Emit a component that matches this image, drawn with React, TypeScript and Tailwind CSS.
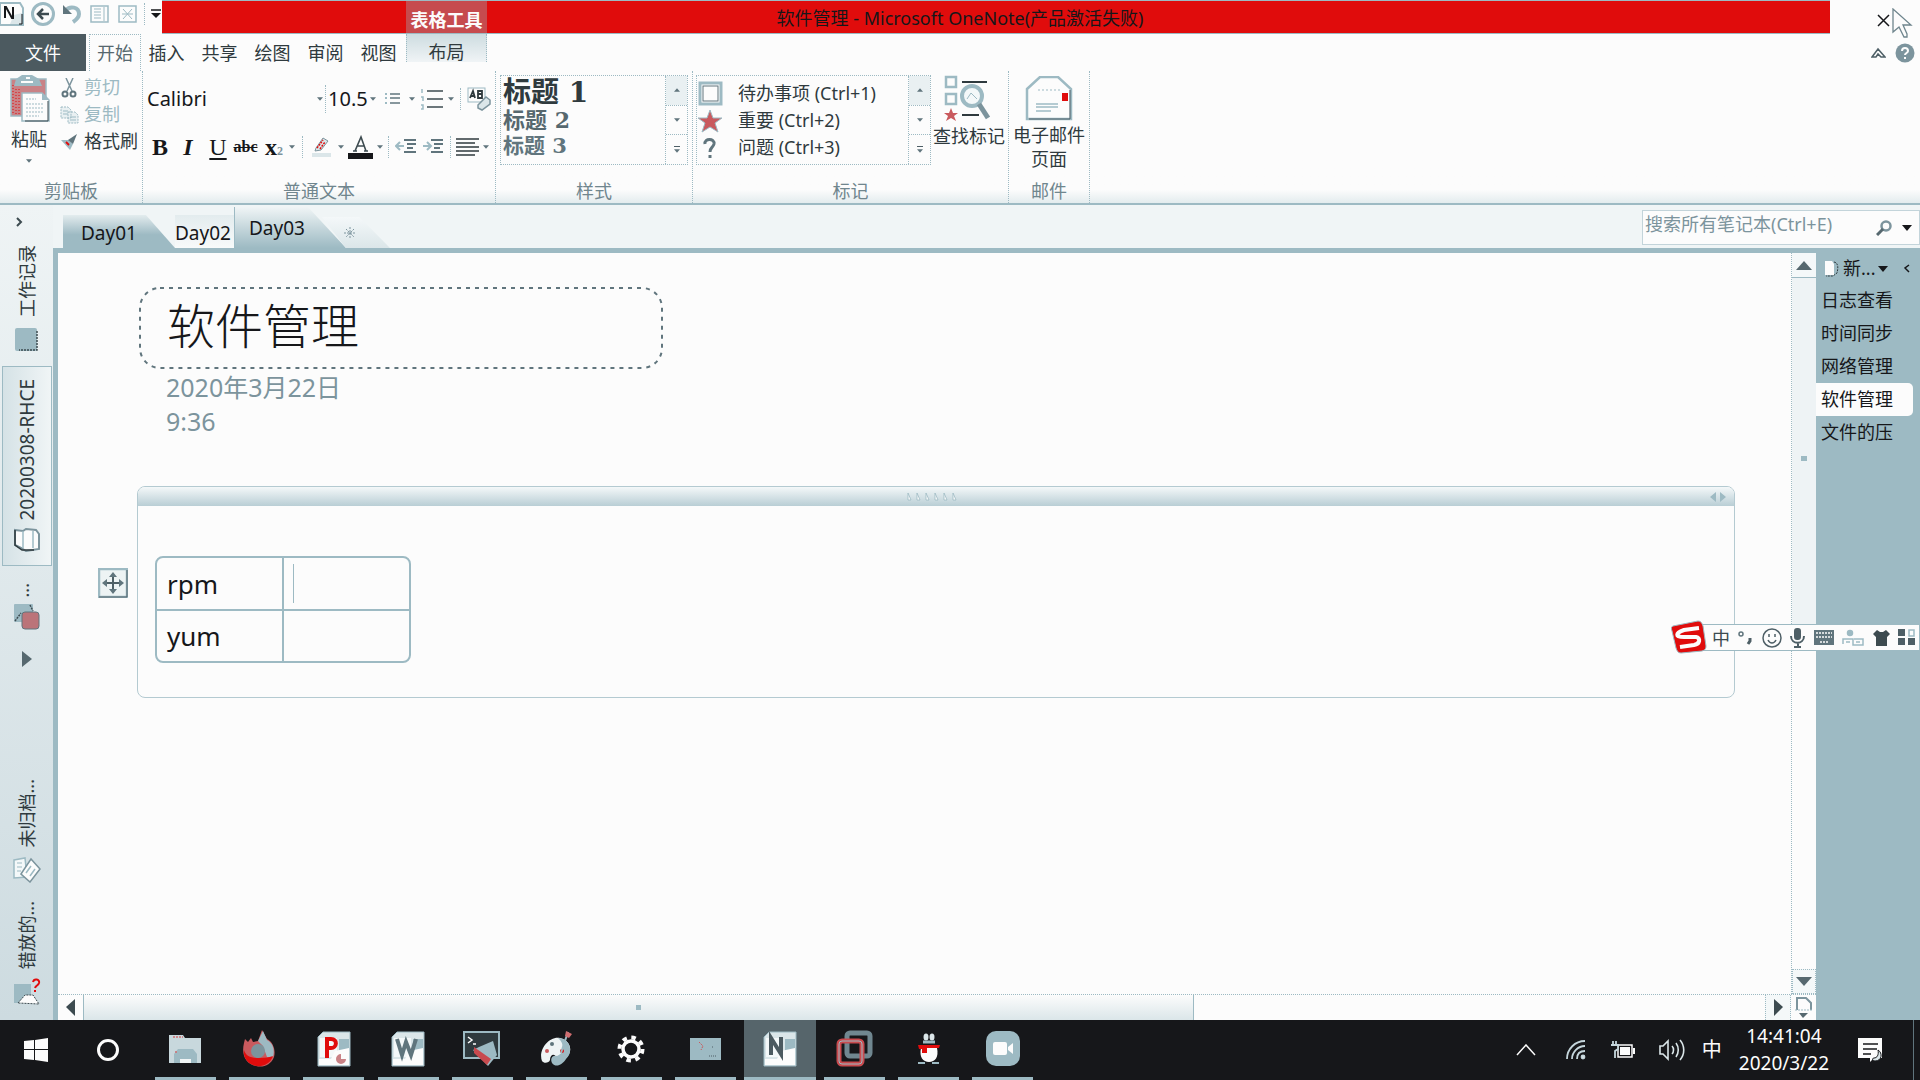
import React from "react";

type Kids = { children?: React.ReactNode };

const TEAL = "#9dbac3";
const INK = "#16171a";
const RED = "#e00c0c";

function Caret({ up = false, big = false }: { up?: boolean; big?: boolean }) {
  return (
    <svg width={big ? 10 : 6} height={big ? 6 : 4} viewBox="0 0 10 6" className="shrink-0" aria-hidden="true">
      <path d={up ? "M0 6L5 0L10 6Z" : "M0 0H10L5 6Z"} fill={big ? INK : "#60757d"} />
    </svg>
  );
}

function Dots() {
  return <span className="h-[22px] w-0 shrink-0 border-l border-dotted border-[#9dbac3]" />;
}

/* ---------- Title bar ---------- */

function TitleBar() {
  return (
    <header className="flex h-[34px] shrink-0 items-start">
      <div className="flex h-[34px] w-[162px] shrink-0 items-center gap-[6px] pb-[6px]">
        <button aria-label="OneNote">
          <svg width="24" height="26" viewBox="0 0 24 26">
            <path d="M0 2H20L23 7V24H0Z" fill="#fcfcfc" stroke={TEAL} strokeWidth="2" />
            <path d="M14 14L22 12V23H10Z" fill="#dbe6e9" />
            <path d="M5 17V6H6L12 17H13V6" fill="none" stroke={INK} strokeWidth="2" />
            <path d="M22 13V23H19" fill="none" stroke={INK} />
          </svg>
        </button>
        <button aria-label="后退">
          <svg width="26" height="26" viewBox="0 0 26 26">
            <circle cx="13" cy="13" r="10.500" fill="#fcfcfc" stroke={TEAL} strokeWidth="3" />
            <path d="M19 13H8M13 8L8 13L13 18" fill="none" stroke="#3d4b50" strokeWidth="2.500" />
          </svg>
        </button>
        <button aria-label="撤消">
          <svg width="20" height="22" viewBox="0 0 20 22">
            <path d="M3 8C8 2 17 4 17 11C17 15 14 17 11 19" fill="none" stroke={TEAL} strokeWidth="4" />
            <path d="M1 2V11H10Z" fill="#60757d" />
          </svg>
        </button>
        <button aria-label="停靠到桌面" className="ml-[2px]">
          <svg width="20" height="18" viewBox="0 0 20 18">
            <rect x="1" y="1" width="17" height="16" fill="none" stroke={TEAL} strokeWidth="1.500" />
            <path d="M4 4H11M4 7H11M4 10H11M4 13H11M14 2V16" stroke={TEAL} />
          </svg>
        </button>
        <button aria-label="整页视图" className="ml-[2px]">
          <svg width="20" height="18" viewBox="0 0 20 18">
            <rect x="1" y="1" width="17" height="16" fill="none" stroke={TEAL} strokeWidth="1.500" />
            <path d="M5 4L14 14M14 4L5 14M4 9H15" stroke={TEAL} />
          </svg>
        </button>
        <Dots />
        <button aria-label="自定义快速访问工具栏">
          <svg width="10" height="10" viewBox="0 0 10 10">
            <path d="M0 1H10" stroke={INK} strokeWidth="1.500" />
            <path d="M0 4H10L5 9Z" fill={INK} />
          </svg>
        </button>
      </div>
      <div className="flex h-[34px] min-w-0 flex-1 border-t border-b border-[#9dbac3] bg-[#e00c0c]">
        <div className="ml-[244px] flex w-[81px] shrink-0 items-center justify-center bg-[#c64b4e] pt-[6px] text-[18px] leading-[24px] font-bold text-[#fcfcfc]">
          表格工具
        </div>
        <h1 className="min-w-0 flex-1 truncate pt-[4px] pr-[397px] text-center text-[18px] leading-[26px] text-[#16171a]">
          软件管理 - Microsoft OneNote(产品激活失败)
        </h1>
      </div>
      <div className="relative flex h-[34px] w-[90px] shrink-0 items-center pt-[6px] pl-[47px]">
        <button aria-label="关闭">
          <svg width="13" height="13" viewBox="0 0 13 13">
            <path d="M1 1L12 12M12 1L1 12" stroke={INK} strokeWidth="1.500" />
          </svg>
        </button>
        <svg className="absolute top-[8px] left-[62px]" width="22" height="32" viewBox="0 0 22 32" aria-hidden="true">
          <path d="M1 1V24L7 19L12 29H15V26L11 17H19Z" fill="#fcfcfc" stroke="#6f858d" strokeWidth="1.300" />
        </svg>
      </div>
    </header>
  );
}

/* ---------- Ribbon tabs ---------- */

function RibbonTabs() {
  const tabs = ["插入", "共享", "绘图", "审阅", "视图"];
  return (
    <nav className="flex h-[37px] shrink-0 text-[18px] leading-[36px]">
      <button className="w-[86px] bg-[#4c5a60] text-[#fcfcfc]">文件</button>
      <button className="ml-[3px] w-[52px] border-x border-t border-dotted border-[#9dbac3] leading-[34px] text-[#56686f]">开始</button>
      <div className="flex w-[265px]">
        {tabs.map((t) => (
          <button key={t} className="flex-1 pr-[2px] text-[#2f3a3e]">{t}</button>
        ))}
      </div>
      <button className="h-[28px] w-[81px] border-x border-dotted border-[#9dbac3] bg-linear-to-b from-[#cddce0] to-[#f0f4f6] text-[#2f3a3e]">布局</button>
      <div className="flex flex-1 items-center justify-end gap-[9px] pr-[5px]">
        <button aria-label="功能区最小化">
          <svg width="15" height="12" viewBox="0 0 15 12">
            <path d="M1 10L7 2L14 10H10L7 7L5 10Z" fill="#fcfcfc" stroke="#4e5f66" strokeWidth="1.500" />
          </svg>
        </button>
        <button aria-label="帮助">
          <svg width="20" height="20" viewBox="0 0 20 20">
            <circle cx="10" cy="10" r="9.500" fill="#7c949d" />
            <path d="M7 8C7 4 13 4 13 8C13 10 10 10 10 12M10 14V16" fill="none" stroke="#fcfcfc" strokeWidth="2" />
          </svg>
        </button>
      </div>
    </nav>
  );
}

/* ---------- Ribbon ---------- */

function Group({ label, width, children }: Kids & { label: string; width: string }) {
  return (
    <section className={"flex shrink-0 flex-col border-r border-dotted border-[#9dbac3] pt-[1px] " + width}>
      <div className="flex h-[107px] min-h-0">{children}</div>
      <div className="text-center text-[18px] leading-[24px] text-[#70868e]">{label}</div>
    </section>
  );
}

function GalleryScroll() {
  return (
    <div className="flex w-[22px] flex-col border-l border-dotted border-[#9dbac3]">
      <button aria-label="上一行" className="flex flex-1 items-center justify-center bg-[#e9f0f2]"><Caret up /></button>
      <button aria-label="下一行" className="flex flex-1 items-center justify-center border-y border-dotted border-[#9dbac3]"><Caret /></button>
      <button aria-label="其他" className="flex flex-1 flex-col items-center justify-center gap-[2px]">
        <svg width="6" height="1" viewBox="0 0 6 1"><path d="M0 0H6" stroke="#4e5f66" strokeWidth="2" /></svg>
        <Caret />
      </button>
    </div>
  );
}

function ListLines({ arrow }: { arrow: "in" | "out" }) {
  return (
    <svg width="22" height="18" viewBox="0 0 22 18" aria-hidden="true">
      <path d="M9 2H21M12 6H21M12 10H18M9 14H21" stroke="#60757d" strokeWidth="1.800" />
      <path d={arrow === "out" ? "M9 8H1M5 4L1 8L5 12" : "M1 8H9M5 4L9 8L5 12"} fill="none" stroke={TEAL} strokeWidth="2" />
    </svg>
  );
}

function ClipboardGroup() {
  return (
    <Group label="剪贴板" width="w-[143px]">
      <button className="flex w-[60px] flex-col items-center pt-[3px] text-[18px] leading-[26px] text-[#2f3a3e]">
        <svg width="42" height="48" viewBox="0 0 42 48">
          <path d="M2 4H37V41H2Z" fill="#c98286" stroke={TEAL} strokeWidth="1.500" />
          <path d="M4 10V39M7 14V39M10 14V39" stroke={RED} strokeDasharray="1 2" />
          <path d="M7 4L13 0H23L30 4L33 11H5Z" fill={TEAL} />
          <path d="M12 7H24M17 3H21" stroke="#fcfcfc" strokeWidth="2" />
          <path d="M13 18H33L40 25V46H13Z" fill="#fcfcfc" stroke={TEAL} strokeWidth="1.500" />
          <path d="M39 26V46H16" fill="none" stroke="#3d4b50" />
          <path d="M33 18V25H40" fill={TEAL} />
          <path d="M17 24H27M17 29H34M17 33H34M17 37H34M17 41H30" stroke={TEAL} strokeDasharray="2 1" />
        </svg>
        <span className="mt-[3px] pr-[2px]">粘贴</span>
        <span className="mt-[7px] flex pr-[2px]"><Caret /></span>
      </button>
      <div className="flex flex-col pt-[2px] text-[18px] leading-[27px]">
        <button className="flex items-center gap-[5px] text-[#9dbac3]">
          <svg width="19" height="20" viewBox="0 0 19 20">
            <path d="M6 0L12 13M13 0L7 13" stroke="#7c949d" strokeWidth="1.500" />
            <circle cx="5" cy="16" r="2.500" fill="none" stroke="#60757d" strokeWidth="2" />
            <circle cx="13" cy="16" r="2.500" fill="none" stroke="#60757d" strokeWidth="2" />
          </svg>
          剪切
        </button>
        <button className="flex items-center gap-[5px] text-[#9dbac3]">
          <svg width="19" height="18" viewBox="0 0 19 18">
            <path d="M1 1H8L11 4V12H1ZM8 6H15L18 9V17H8Z" fill="#e9f0f2" stroke={TEAL} strokeDasharray="2 1" />
            <path d="M3 5H8M3 8H8M10 11H16M10 14H16" stroke={TEAL} />
          </svg>
          复制
        </button>
        <button className="flex items-center gap-[5px] text-[#2f3a3e]">
          <svg width="19" height="18" viewBox="0 0 19 18">
            <path d="M1 7L9 7L13 11L10 17Z" fill={TEAL} />
            <path d="M8 7L17 1L13 11Z" fill="#60757d" />
            <path d="M6 9L9 12" stroke={RED} strokeWidth="2" />
          </svg>
          格式刷
        </button>
      </div>
    </Group>
  );
}

function FontGroup() {
  return (
    <Group label="普通文本" width="w-[353px]">
      <div className="flex w-full flex-col pl-[4px]">
        <div className="flex h-[50px] items-center pt-[3px] text-[20px]">
          <select aria-label="字体" className="h-[28px] w-[170px] appearance-none bg-transparent text-[20px] leading-[28px] outline-none">
            <option>Calibri</option>
          </select>
          <Caret />
          <span className="ml-[2px] h-[28px] w-0 border-l border-dotted border-[#9dbac3]" />
          <select aria-label="字号" className="ml-[2px] h-[28px] w-[42px] appearance-none bg-transparent text-[20px] leading-[28px] outline-none">
            <option>10.5</option>
          </select>
          <Caret />
          <button aria-label="项目符号" className="ml-[9px] flex items-center gap-[9px]">
            <svg width="15" height="13" viewBox="0 0 15 13">
              <path d="M5 2H15M5 6H15M5 11H15" stroke="#60757d" strokeWidth="1.500" />
              <path d="M0 2H2M0 6H2M0 11H2" stroke={TEAL} strokeWidth="2" />
            </svg>
            <Caret />
          </button>
          <button aria-label="编号" className="ml-[5px] flex items-center gap-[5px]">
            <svg width="23" height="22" viewBox="0 0 23 22">
              <path d="M7 3H23M7 11H23M7 19H23" stroke="#3d4b50" strokeWidth="1.500" />
              <path d="M2 1V5M1 9H3V13M1 17H3V21H1" fill="none" stroke={TEAL} strokeWidth="1.500" />
            </svg>
            <Caret />
          </button>
          <span className="ml-[6px] flex"><Dots /></span>
          <button aria-label="清除格式" className="ml-[6px]">
            <svg width="24" height="26" viewBox="0 0 24 26">
              <rect x="1" y="2" width="17" height="14" fill="#fcfcfc" stroke={TEAL} />
              <path d="M3 12L6 5L8 12M4 10H8M11 5V12H15V5Z M11 8H15" fill="none" stroke="#2f3a3e" strokeWidth="1.800" />
              <path d="M11 19L19 11L23 14V18L15 24L11 22Z" fill="#dbe6e9" stroke="#7c949d" strokeWidth="1.500" />
            </svg>
          </button>
        </div>
        <div className="flex h-[50px] items-center font-['Liberation_Serif',serif] text-[24px] leading-[26px] text-[#16171a]">
          <button aria-label="加粗" className="ml-[4px] w-[18px] font-bold">B</button>
          <button aria-label="倾斜" className="ml-[10px] w-[18px] font-bold italic">I</button>
          <button aria-label="下划线" className="ml-[12px] w-[18px] underline underline-offset-3">U</button>
          <button aria-label="删除线" className="ml-[6px] w-[25px] text-[16px] font-bold line-through">abc</button>
          <button aria-label="下标" className="ml-[7px] flex w-[24px] items-baseline font-bold">
            x<span className="text-[12px] leading-[12px] text-[#7c949d]">2</span>
          </button>
          <Caret />
          <span className="ml-[7px] flex"><Dots /></span>
          <button aria-label="以不同颜色突出显示文本" className="ml-[9px] flex items-center gap-[7px]">
            <svg width="19" height="22" viewBox="0 0 19 22">
              <path d="M4 12L11 2L16 5L9 14L3 15Z" fill="#dbe6e9" stroke="#7c949d" />
              <path d="M5 12L11 4M8 13L13 6" stroke={RED} strokeWidth="1.500" strokeDasharray="2 1" />
              <path d="M0 19H19" stroke="#dbe6e9" strokeWidth="4" />
            </svg>
            <Caret />
          </button>
          <button aria-label="字体颜色" className="ml-[4px] flex items-center gap-[4px]">
            <svg width="25" height="24" viewBox="0 0 25 24">
              <path d="M7 16L13 2L18 16M9 11H16M5 16H9M16 16H20" fill="none" stroke="#3d4b50" strokeWidth="1.600" />
              <rect y="18" width="25" height="6" fill={INK} />
            </svg>
            <Caret />
          </button>
          <span className="ml-[5px] flex"><Dots /></span>
          <button aria-label="减少缩进量" className="ml-[6px]"><ListLines arrow="out" /></button>
          <button aria-label="增加缩进量" className="ml-[5px]"><ListLines arrow="in" /></button>
          <span className="ml-[6px] flex"><Dots /></span>
          <button aria-label="段落对齐" className="ml-[5px] flex items-center gap-[4px]">
            <svg width="23" height="18" viewBox="0 0 23 18">
              <path d="M0 1H23M0 5H19M0 9H23M0 13H23M0 17H19" stroke="#2f3a3e" strokeWidth="1.600" />
            </svg>
            <Caret />
          </button>
        </div>
      </div>
    </Group>
  );
}

function StylesGroup() {
  return (
    <Group label="样式" width="w-[197px]">
      <div className="mx-[4px] mt-[3px] flex h-[90px] flex-1 border border-dotted border-[#9dbac3]">
        <div className="flex flex-1 flex-col items-start pt-[2px] pl-[2px] font-['DejaVu_Serif','Noto_Sans_CJK_SC',serif] font-bold whitespace-nowrap">
          <button className="h-[29px] text-[28px] leading-[29px] text-[#2f3a3e]">标题 1</button>
          <button className="h-[26px] text-[22px] leading-[26px] text-[#56686f]">标题 2</button>
          <button className="h-[26px] text-[21px] leading-[26px] text-[#60757d]">标题 3</button>
        </div>
        <GalleryScroll />
      </div>
    </Group>
  );
}

function TagsGroup() {
  const row = "flex h-[27px] items-center gap-[15px] text-[18px] leading-[27px] whitespace-nowrap text-[#2f3a3e]";
  return (
    <Group label="标记" width="w-[316px]">
      <div className="mt-[3px] ml-[3px] flex h-[90px] w-[235px] border border-dotted border-[#9dbac3]">
        <div className="flex flex-1 flex-col pt-[4px] pl-[1px]">
          <button className={row}>
            <svg width="25" height="25" viewBox="0 0 25 25">
              <rect x="2" y="2" width="21" height="21" fill="#fcfcfc" stroke={TEAL} strokeWidth="3" />
              <rect x="5" y="5" width="15" height="15" fill="none" stroke="#60757d" />
            </svg>
            待办事项 (Ctrl+1)
          </button>
          <button className={row}>
            <svg width="25" height="24" viewBox="0 0 25 24">
              <path d="M12 1L15 9L24 9L17 14L20 23L12 18L4 23L7 14L0 9L9 9Z" fill="#c95a5e" stroke={TEAL} />
            </svg>
            重要 (Ctrl+2)
          </button>
          <button className={row}>
            <svg width="25" height="22" viewBox="0 0 25 22">
              <path d="M7 7C6 1 17 1 16 7C15 11 12 10 12 15M12 18V21" fill="none" stroke="#60757d" strokeWidth="3" />
            </svg>
            问题 (Ctrl+3)
          </button>
        </div>
        <GalleryScroll />
      </div>
      <button className="ml-[2px] flex flex-col items-center pt-[3px] text-[18px] leading-[24px] text-[#2f3a3e]">
        <svg width="46" height="48" viewBox="0 0 46 48" className="mr-[4px]">
          <rect x="2" y="2" width="10" height="10" fill="none" stroke={TEAL} strokeWidth="2.500" />
          <rect x="2" y="19" width="10" height="10" fill="none" stroke={TEAL} strokeWidth="2.500" />
          <path d="M7 33L9 38L14 38L10 41L12 46L7 43L2 46L4 41L0 38L5 38Z" fill="#c95a5e" />
          <path d="M18 7H43M18 40H35" stroke="#2f3a3e" strokeWidth="2" />
          <circle cx="28" cy="21" r="10" fill="#f4f8f9" stroke={TEAL} strokeWidth="4" />
          <path d="M23 24L27 18L33 24" fill="none" stroke={TEAL} />
          <path d="M35 29L44 43" stroke="#7c949d" strokeWidth="5" />
        </svg>
        <span className="mt-[1px]">查找标记</span>
      </button>
    </Group>
  );
}

function MailGroup() {
  return (
    <Group label="邮件" width="w-[81px]">
      <button className="flex w-full flex-col items-center pt-[4px] text-[18px] leading-[24px] text-[#2f3a3e]">
        <svg width="48" height="46" viewBox="0 0 48 46">
          <path d="M2 13L15 1H33L46 13V43H2Z" fill="#fcfcfc" stroke={TEAL} strokeWidth="2.500" />
          <path d="M4 43H45V14" fill="none" stroke="#4e5f66" />
          <path d="M13 14H35" stroke={TEAL} strokeDasharray="2 2" />
          <rect x="37" y="17" width="6" height="8" fill={RED} />
          <path d="M11 28H33M11 31H33M11 35H26" stroke={TEAL} strokeWidth="1.500" />
        </svg>
        <span className="mt-[1px] whitespace-nowrap">电子邮件</span>
        <span>页面</span>
      </button>
    </Group>
  );
}

function Ribbon() {
  return (
    <div className="flex h-[134px] shrink-0 border-b-2 border-[#9dbac3] bg-linear-to-b from-[#fcfcfc] from-90% to-[#e3ecee]">
      <ClipboardGroup />
      <FontGroup />
      <StylesGroup />
      <TagsGroup />
      <MailGroup />
    </div>
  );
}

/* ---------- Notebook sidebar ---------- */

function Vertical({ children }: Kids) {
  return (
    <span className="rotate-180 leading-[24px] whitespace-nowrap text-[#2f3a3e] [text-orientation:sideways] [writing-mode:vertical-rl]">
      {children}
    </span>
  );
}

function NotebookBar() {
  return (
    <aside className="flex w-[53px] shrink-0 flex-col items-center bg-linear-to-b from-[#eff4f5] to-[#cddbe0] text-[18px]">
      <button aria-label="展开导航栏" className="mt-[11px] mr-[14px] h-[12px]">
        <svg width="8" height="10" viewBox="0 0 8 10"><path d="M1 1L5 5L1 9" fill="none" stroke="#3d4b50" strokeWidth="2" /></svg>
      </button>
      <button className="mt-[17px] flex h-[121px] flex-col items-center gap-[11px]">
        <Vertical>工作记录</Vertical>
        <svg width="24" height="24" viewBox="0 0 24 24">
          <rect width="22" height="23" rx="2" fill={TEAL} />
          <path d="M22 3V22H4" fill="none" stroke="#3d4b50" strokeWidth="1.500" strokeDasharray="2 1" />
        </svg>
      </button>
      <button className="flex h-[200px] w-[50px] flex-col items-center border border-[#9dbac3] bg-linear-to-r from-[#d5e2e6] to-[#f0f5f6] pt-[4px] text-[19px]">
        <span className="flex flex-1 items-center"><Vertical>20200308-RHCE</Vertical></span>
        <svg className="mb-[13px]" width="26" height="24" viewBox="0 0 26 24">
          <path d="M1 2L9 3L12 1L22 2L25 6V21L12 23L7 20L1 17Z" fill="#fcfcfc" stroke="#7c949d" strokeWidth="2" />
          <path d="M9 3V20M19 3V20" fill="none" stroke={TEAL} strokeWidth="1.500" />
          <path d="M1 2V17L8 22H20" fill="none" stroke="#2f3a3e" strokeWidth="1.500" />
        </svg>
      </button>
      <span className="mt-[11px] h-[20px] pr-[9px]"><Vertical>...</Vertical></span>
      <button aria-label="笔记本" className="mt-[6px]">
        <svg width="28" height="28" viewBox="0 0 28 28">
          <rect x="1" y="1" width="19" height="18" rx="1" fill={TEAL} />
          <path d="M2 18L8 10M17 2L20 8" stroke="#3d4b50" strokeWidth="1.500" strokeDasharray="2 1" />
          <rect x="9" y="9" width="17" height="17" rx="3" fill="#bb7479" stroke="#60757d" />
        </svg>
      </button>
      <button aria-label="更多笔记本" className="mt-[20px]">
        <svg width="10" height="16" viewBox="0 0 10 16"><path d="M0 0L10 8L0 16Z" fill="#56686f" /></svg>
      </button>
      <div className="mt-auto flex flex-col items-center">
        <button className="flex flex-col items-center gap-[9px]">
          <Vertical>未归档...</Vertical>
          <svg width="28" height="26" viewBox="0 0 28 26">
            <path d="M1 3L12 1L14 20L1 21Z" fill="#f4f8f9" stroke={TEAL} strokeWidth="1.500" />
            <path d="M4 6H9M4 10H9M4 14H8" stroke={TEAL} />
            <path d="M8 17L18 2L27 12L17 25Z" fill="#fcfcfc" stroke="#7c949d" strokeWidth="1.500" />
            <path d="M13 16L18 9M17 19L22 12" stroke={TEAL} strokeWidth="1.500" />
          </svg>
        </button>
        <button className="mt-[18px] mb-[14px] flex flex-col items-center gap-[9px]">
          <Vertical>错放的...</Vertical>
          <svg width="28" height="28" viewBox="0 0 28 28">
            <rect x="1" y="6" width="17" height="19" fill={TEAL} />
            <path d="M5 25L12 17H20L26 26Z" fill="#fcfcfc" stroke="#3d4b50" strokeDasharray="2 1" />
            <path d="M20 4C21 0 27 1 26 5C25 8 23 7 22 10M22 12V14" fill="none" stroke={RED} strokeWidth="2" />
          </svg>
        </button>
      </div>
    </aside>
  );
}

/* ---------- Section tabs and search ---------- */

function SectionTabs() {
  return (
    <div className="flex h-[43px] shrink-0 items-end bg-[#f0f5f6] pl-[10px]">
      <button className="h-[33px] w-[112px] bg-linear-to-b from-[#e3ecee] to-[#9dbac3] to-60% pl-[18px] text-left text-[19px] leading-[36px] [clip-path:polygon(0_0,74%_0,100%_100%,0_100%)]">
        Day01
      </button>
      <button className="h-[33px] w-[59px] bg-linear-to-b from-[#e3ecee] to-[#f8fafa] text-right text-[19px] leading-[36px]">
        <span className="pr-[4px]">Day02</span>
      </button>
      <button className="h-[41px] w-[112px] border-l border-[#9dbac3] bg-linear-to-b from-[#f0f5f6] to-[#9dbac3] pl-[14px] text-left text-[19px] leading-[42px] [clip-path:polygon(0_0,66%_0,100%_100%,0_100%)]">
        Day03
      </button>
      <button aria-label="创建新分区" className="-ml-[24px] flex h-[31px] w-[68px] items-center bg-linear-to-b from-[#f4f8f9] to-[#dbe6e9] pl-[22px] [clip-path:polygon(0_0,55%_0,100%_100%,35%_100%)]">
        <svg width="12" height="12" viewBox="0 0 12 12">
          <path d="M6 0V12M0 6H12M2 2L10 10M10 2L2 10" stroke="#7c949d" strokeDasharray="2 1" />
        </svg>
      </button>
      <div className="mb-[3px] ml-auto flex h-[35px] w-[278px] shrink-0 items-center border border-[#c3d4da] bg-[#fcfcfc] pr-[7px]">
        <input
          aria-label="搜索所有笔记本"
          placeholder="搜索所有笔记本(Ctrl+E)"
          className="mb-[8px] min-w-0 flex-1 bg-transparent pl-[2px] text-[18px] leading-[26px] outline-none placeholder:text-[#7c949d]"
        />
        <button aria-label="搜索">
          <svg width="16" height="16" viewBox="0 0 16 16">
            <circle cx="10" cy="6" r="4.500" fill="none" stroke="#7c949d" strokeWidth="2.500" />
            <path d="M7 9L1 15" stroke="#56686f" strokeWidth="3" />
          </svg>
        </button>
        <button aria-label="搜索范围" className="ml-[10px]"><Caret big /></button>
      </div>
    </div>
  );
}

/* ---------- Note page ---------- */

function NotePage() {
  return (
    <main className="min-w-0 flex-1 overflow-hidden bg-[#fcfcfc] pt-[34px]">
      <div className="relative ml-[81px] h-[82px] w-[525px] pl-[28px]">
        <svg className="absolute inset-0 h-full w-full" aria-hidden="true">
          <rect x="1" y="1" width="522" height="80" rx="20" fill="none" stroke="#60757d" strokeWidth="2" strokeDasharray="4 5" />
        </svg>
        <h2 className="text-[48px] leading-[78px] font-light text-[#16171a]">软件管理</h2>
      </div>
      <div className="mt-[1px] ml-[108px] text-[25px] leading-[34px] text-[#7c949d]">
        <p>
          <time>2020年3月22日</time>
        </p>
        <p>9:36</p>
      </div>
      <div className="relative mt-[48px] mr-[56px] ml-[79px] h-[212px] rounded-[8px] border border-[#b4cad1]">
        <div className="flex h-[19px] items-center rounded-t-[7px] bg-linear-to-b from-[#f4f8f9] to-[#b9ced5] pl-[16px]">
          <svg className="mx-auto" width="52" height="8" viewBox="0 0 52 8" aria-hidden="true">
            <path d="M2 0V7H5ZM11 0V7H14ZM20 0V7H23ZM29 0V7H32ZM38 0V7H41ZM47 0V7H50Z" fill="#fcfcfc" stroke={TEAL} strokeWidth="0.800" />
          </svg>
          <svg className="mr-[8px]" width="16" height="10" viewBox="0 0 16 10" aria-hidden="true">
            <path d="M6 0V10L0 5ZM10 0V10L16 5Z" fill={TEAL} />
          </svg>
        </div>
        <button aria-label="移动" className="absolute top-[81px] -left-[40px]">
          <svg width="30" height="30" viewBox="0 0 30 30">
            <rect x="1" y="1" width="28" height="28" fill="#edf3f4" stroke={TEAL} strokeWidth="2.500" />
            <path d="M1 29H29V2" fill="none" stroke="#4e5f66" />
            <path d="M15 7V23M7 15H23" stroke="#4e5f66" strokeWidth="2" />
            <path d="M15 4L19 9H11ZM15 26L11 21H19ZM4 15L9 11V19ZM26 15L21 19V11Z" fill="#60757d" />
          </svg>
        </button>
        <div className="mt-[50px] ml-[17px] w-[256px] overflow-hidden rounded-[8px] border-2 border-[#9dbac3]">
          <table className="w-full table-fixed text-[26px] leading-[50px] text-[#16171a]">
            <tbody>
              <tr className="h-[52px]">
                <td className="border-r-2 border-b-2 border-[#9dbac3] pl-[10px]">rpm</td>
                <td className="border-b-2 border-[#9dbac3] pl-[9px]">
                  <span className="block h-[39px] w-px bg-[#9dbac3]" />
                </td>
              </tr>
              <tr className="h-[50px]">
                <td className="border-r-2 border-[#9dbac3] pl-[10px]">yum</td>
                <td />
              </tr>
            </tbody>
          </table>
        </div>
      </div>
    </main>
  );
}

function VerticalScroll() {
  return (
    <div className="flex w-[25px] shrink-0 flex-col border-l border-dotted border-[#9dbac3]">
      <button aria-label="向上滚动" className="flex h-[25px] items-center justify-center border-b border-[#9dbac3] bg-[#f4f8f9]">
        <svg width="16" height="9" viewBox="0 0 16 9"><path d="M0 9L8 0L16 9Z" fill="#56686f" /></svg>
      </button>
      <div className="flex h-[360px] items-center justify-center bg-[#eef3f5]">
        <span className="h-[5px] w-[6px] bg-[#9dbac3]" />
      </div>
      <div className="flex-1" />
      <button aria-label="向下滚动" className="flex h-[25px] items-center justify-center border border-dotted border-[#9dbac3] bg-[#f4f8f9]">
        <svg width="16" height="9" viewBox="0 0 16 9"><path d="M0 0H16L8 9Z" fill="#56686f" /></svg>
      </button>
    </div>
  );
}

function HorizontalScroll() {
  return (
    <div className="flex h-[26px] shrink-0 border-t border-dotted border-[#9dbac3]">
      <button aria-label="向左滚动" className="flex w-[26px] items-center justify-center border-r border-[#9dbac3]">
        <svg width="9" height="17" viewBox="0 0 9 17"><path d="M9 0V17L0 8Z" fill="#3d4b50" /></svg>
      </button>
      <div className="flex w-[1110px] items-center justify-center border-r border-[#9dbac3] bg-linear-to-b from-[#fcfcfc] to-[#dbe6e9]">
        <span className="h-[5px] w-[5px] bg-[#9dbac3]" />
      </div>
      <div className="flex-1" />
      <button aria-label="向右滚动" className="flex w-[26px] items-center justify-center border-x border-dotted border-[#9dbac3] bg-[#f4f8f9]">
        <svg width="9" height="17" viewBox="0 0 9 17"><path d="M0 0V17L9 8Z" fill="#3d4b50" /></svg>
      </button>
      <button aria-label="新建页面" className="flex w-[25px] items-center justify-center">
        <svg width="18" height="22" viewBox="0 0 18 22">
          <path d="M2 13V1H11L16 6V13" fill="none" stroke="#7c949d" strokeWidth="2" />
          <path d="M0 13H18" stroke={TEAL} strokeDasharray="2 1" />
          <path d="M4 16H13L8 21Z" fill="#56686f" />
        </svg>
      </button>
    </div>
  );
}

function PageList() {
  const pages = ["日志查看", "时间同步", "网络管理", "软件管理", "文件的压"];
  return (
    <aside className="w-[104px] shrink-0 bg-[#9dbac3] text-[18px] leading-[33px] text-[#16171a]">
      <div className="flex h-[31px] items-center pl-[8px]">
        <svg width="15" height="17" viewBox="0 0 15 17">
          <path d="M1 1H8L10 4V15H1Z" fill="#fcfcfc" />
          <path d="M10 2C15 3 14 9 13 13L9 16H2" fill="none" stroke="#2f3a3e" strokeDasharray="2 1" />
        </svg>
        <button className="ml-[4px] w-[32px]">新...</button>
        <button aria-label="新建页选项" className="ml-[3px]"><Caret big /></button>
        <button aria-label="折叠页标签" className="ml-auto pr-[10px]">
          <svg width="6" height="9" viewBox="0 0 6 9"><path d="M5 1L1 4L5 8" fill="none" stroke={INK} strokeWidth="1.500" /></svg>
        </button>
      </div>
      <ul>
        {pages.map((p) => (
          <li key={p}>
            <button className={p === "软件管理" ? "h-[33px] w-[97px] rounded-r-[5px] bg-[#fcfcfc] pl-[5px] text-left" : "h-[33px] w-[97px] pl-[5px] text-left"}>{p}</button>
          </li>
        ))}
      </ul>
    </aside>
  );
}

/* ---------- Input method bar ---------- */

function ImeBar() {
  return (
    <div className="absolute right-[1px] bottom-[429px] flex h-[27px] w-[230px] items-center border-y border-l border-[#9dbac3] bg-[#fcfcfc] pl-[22px] text-[#3d4b50]">
      <svg className="absolute -top-[5px] -left-[19px]" width="36" height="34" viewBox="0 0 36 34" aria-hidden="true">
        <path d="M2 6L27 1C30 1 31 3 32 6L35 26C35 29 34 30 31 31L10 33C7 33 6 31 5 28L1 11C0 8 0 7 2 6Z" fill={RED} stroke={TEAL} />
        <path d="M28 8L13 10C4 13 4 17 13 17H25C30 18 29 24 23 25L9 27" fill="none" stroke="#fcfcfc" strokeWidth="4" />
      </svg>
      <div className="flex flex-1 items-center justify-between pr-[4px]">
        <button className="text-[18px] leading-[24px]">中</button>
        <button aria-label="标点">
          <svg width="15" height="15" viewBox="0 0 15 15">
            <circle cx="3" cy="4" r="2" fill="none" stroke="#60757d" strokeWidth="1.500" />
            <path d="M12 8V11L10 14" fill="none" stroke="#4e5f66" strokeWidth="3" />
          </svg>
        </button>
        <button aria-label="表情">
          <svg width="20" height="20" viewBox="0 0 20 20" fill="none" stroke="#4e5f66" strokeWidth="1.500">
            <circle cx="10" cy="10" r="9" />
            <path d="M7 6V9M13 6V9M6 12C8 16 12 16 14 12" />
          </svg>
        </button>
        <button aria-label="语音">
          <svg width="15" height="20" viewBox="0 0 15 20" fill="none" stroke="#4e5f66" strokeWidth="2">
            <rect x="5" y="1" width="5" height="10" rx="2" fill="#4e5f66" />
            <path d="M1 8C1 17 14 17 14 8M8 15V19M4 19H11" />
          </svg>
        </button>
        <button aria-label="软键盘">
          <svg width="20" height="15" viewBox="0 0 20 15">
            <rect width="20" height="15" fill="#60757d" />
            <path d="M2 3H18M2 7H18M6 12H14" stroke="#fcfcfc" strokeWidth="1.500" strokeDasharray="2 1" />
          </svg>
        </button>
        <button aria-label="账户">
          <svg width="22" height="18" viewBox="0 0 22 18" fill="none" stroke={TEAL} strokeWidth="1.500">
            <circle cx="8" cy="4" r="2.500" fill={TEAL} />
            <path d="M1 15V10H11V16H21V10H12M4 13H8M14 13H18" />
          </svg>
        </button>
        <button aria-label="皮肤">
          <svg width="17" height="17" viewBox="0 0 17 17">
            <path d="M4 1L7 3H10L13 1L17 5L14 8V17H3V8L0 5Z" fill="#3d4b50" />
          </svg>
        </button>
        <button aria-label="工具箱">
          <svg width="17" height="17" viewBox="0 0 17 17">
            <path d="M0 0H7V7H0ZM0 9H7V16H0ZM10 9H17V16H10Z" fill="#4e5f66" />
            <rect x="11" y="1" width="5" height="6" fill="none" stroke={TEAL} strokeWidth="1.500" />
          </svg>
        </button>
      </div>
    </div>
  );
}

/* ---------- Taskbar ---------- */

const OfficePage = ({ mark, color, children }: Kids & { mark: string; color: string }) => (
  <svg width="34" height="36" viewBox="0 0 34 36">
    <path d="M6 1H33V35H1V6Z" fill="#dbe6e9" stroke={TEAL} />
    <path d="M3 7H20V26H3Z" fill="#f4f8f9" />
    <path d="M22 8H32V20H22Z" fill={TEAL} />
    <path d="M18 20L32 17V34H2V28H14Z" fill="#fcfcfc" />
    <path d={mark} fill="none" stroke={color} strokeWidth="4" />
    {children}
  </svg>
);

const taskIcons: { name: string; icon: React.ReactNode }[] = [
  {
    name: "文件资源管理器",
    icon: (
      <svg width="33" height="30" viewBox="0 0 33 30">
        <path d="M0 1H14L16 4H32V29H0Z" fill="#c8d8dd" />
        <path d="M5 29V20L9 15H24L28 20V29H22V25H11V29Z" fill={TEAL} />
        <path d="M4 3H14M6 18H8" stroke="#cf6d70" strokeWidth="1.500" strokeDasharray="2 1" />
        <path d="M11 25H22V29H11Z" fill="#eff4f5" />
      </svg>
    ),
  },
  {
    name: "Firefox",
    icon: (
      <svg width="34" height="38" viewBox="0 0 34 38">
        <path d="M2 13L3 9L6 12L9 8L11 12L16 11L20 0L25 9C31 12 34 20 32 27C29 35 21 38 14 36C4 34-1 25 2 13Z" fill="#c95a5e" />
        <path d="M16 11L21 1L25 10C31 13 33 20 31 27L25 27L21 16Z" fill={TEAL} />
        <circle cx="16" cy="21" r="7" fill="#7c949d" />
        <path d="M2 20C4 27 10 28 18 28C24 28 28 27 31 26C28 35 18 38 11 35C4 32 1 26 2 20Z" fill={RED} />
      </svg>
    ),
  },
  {
    name: "PowerPoint",
    icon: (
      <OfficePage mark="M10 27V8H14C21 8 20 17 14 17H11" color={RED}>
        <path d="M24 23A5 5 0 1 0 29 28H24Z" fill="#c98286" />
      </OfficePage>
    ),
  },
  { name: "Word", icon: <OfficePage mark="M6 8L11 24L15 11L20 24L25 8" color="#60757d" /> },
  {
    name: "Xshell",
    icon: (
      <svg width="38" height="36" viewBox="0 0 38 36">
        <rect x="1" y="1" width="35" height="26" fill="#2f3a3e" stroke={TEAL} strokeWidth="2" />
        <path d="M5 6L9 9L5 12M10 13H13" fill="none" stroke="#fcfcfc" strokeWidth="1.500" />
        <path d="M16 16L30 10L34 24L25 35L10 19Z" fill={TEAL} />
        <path d="M11 16L28 28L24 34L11 22Z" fill="#c84a4e" />
      </svg>
    ),
  },
  {
    name: "画图",
    icon: (
      <svg width="34" height="40" viewBox="0 0 34 40">
        <path d="M2 32C-2 22 8 7 20 9C30 11 34 22 26 29C21 34 17 32 16 28C14 24 10 26 10 31C9 34 4 35 2 32Z" fill="#eff4f5" />
        <path d="M18 9C30 9 34 23 26 30C22 36 16 39 12 34C10 30 12 26 17 27C24 25 25 14 18 9Z" fill={TEAL} />
        <circle cx="7" cy="22" r="2" fill="#c95a5e" /><circle cx="12" cy="15" r="2" fill="#60757d" /><circle cx="22" cy="22" r="2" fill={RED} />
        <path d="M28 3L21 24" stroke={TEAL} strokeWidth="2" />
        <path d="M26 2L32 5L29 9L25 7Z" fill="#cf6d70" />
      </svg>
    ),
  },
  {
    name: "设置",
    icon: (
      <svg width="28" height="28" viewBox="0 0 28 28">
        <circle cx="14" cy="14" r="11.500" fill="none" stroke="#fcfcfc" strokeWidth="4" strokeDasharray="4.500 4.530" />
        <circle cx="14" cy="14" r="8" fill="none" stroke="#fcfcfc" strokeWidth="3.500" />
      </svg>
    ),
  },
  {
    name: "远程桌面",
    icon: (
      <svg width="31" height="22" viewBox="0 0 31 22">
        <rect width="31" height="22" fill={TEAL} />
        <path d="M9 4L13 8L11 12" fill="none" stroke="#c95a5e" strokeDasharray="2 1" />
        <path d="M19 18H27M22 9H23" stroke="#4e5f66" strokeDasharray="1 1" />
      </svg>
    ),
  },
  { name: "OneNote", icon: <OfficePage mark="M8 24V7L18 23V6" color="#4c5a60" /> },
  {
    name: "VMware",
    icon: (
      <svg width="37" height="37" viewBox="0 0 37 37" fill="none">
        <rect x="11" y="3" width="23" height="23" rx="3" stroke="#708790" strokeWidth="5" />
        <rect x="3" y="11" width="23" height="23" rx="3" stroke="#c84a4e" strokeWidth="5" />
        <rect x="3" y="11" width="23" height="23" rx="3" stroke={TEAL} />
      </svg>
    ),
  },
  {
    name: "QQ",
    icon: (
      <svg width="24" height="32" viewBox="0 0 24 32">
        <ellipse cx="9" cy="4" rx="2.500" ry="3.500" fill="#dbe6e9" /><ellipse cx="15" cy="4" rx="2.500" ry="3.500" fill="#dbe6e9" />
        <path d="M6 9H18" stroke={TEAL} strokeWidth="3" />
        <path d="M4 15H20C22 24 18 29 12 29C6 29 2 24 4 15Z" fill="#fcfcfc" />
        <path d="M1 12H23L22 15H10V20H5V16H2Z" fill={RED} />
        <path d="M1 30H8M15 30H22" stroke={TEAL} strokeWidth="2" />
      </svg>
    ),
  },
  {
    name: "会议",
    icon: (
      <svg width="34" height="35" viewBox="0 0 34 35">
        <rect width="34" height="35" rx="10" fill={TEAL} />
        <rect x="7" y="11" width="14" height="13" rx="2" fill="#fcfcfc" />
        <path d="M22 16L27 12V23L22 19Z" fill="#fcfcfc" />
      </svg>
    ),
  },
];

function Taskbar() {
  return (
    <footer className="flex h-[60px] shrink-0 bg-[#16171a] text-[#fcfcfc]">
      <button aria-label="开始" className="flex w-[72px] items-center justify-center">
        <svg width="24" height="24" viewBox="0 0 24 24">
          <path d="M0 3L10 2V11H0ZM11 2L24 0V11H11ZM0 12H10V22L0 21ZM11 12H24V24L11 22Z" fill="#fcfcfc" />
        </svg>
      </button>
      <button aria-label="Cortana" className="flex w-[72px] items-center justify-center">
        <svg width="24" height="24" viewBox="0 0 24 24"><circle cx="12" cy="12" r="9.500" fill="none" stroke="#fcfcfc" strokeWidth="3" /></svg>
      </button>
      <div className="ml-[5px] flex w-[890px] justify-between">
        {taskIcons.map((t) => (
          <button
            key={t.name}
            aria-label={t.name}
            className={t.name === "OneNote" ? "flex w-[72px] flex-col items-center bg-[#56656b]" : "flex w-[72px] flex-col items-center"}
          >
            <span className="flex flex-1 items-center">{t.icon}</span>
            <span className={t.name === "OneNote" ? "h-[3px] w-full bg-[#9dbac3]" : "h-[3px] w-[61px] bg-[#9dbac3]"} />
          </button>
        ))}
      </div>
      <div className="ml-auto flex items-center">
        <button aria-label="显示隐藏的图标" className="mr-[30px]">
          <svg width="20" height="12" viewBox="0 0 20 12"><path d="M1 11L10 1L19 11" fill="none" stroke="#fcfcfc" strokeWidth="1.500" /></svg>
        </button>
        <button aria-label="网络" className="mr-[24px]">
          <svg width="20" height="20" viewBox="0 0 20 20" fill="none" stroke="#c5d6dc" strokeWidth="1.800">
            <path d="M1 19C1 9 9 1 19 1M6 19C6 12 12 6 19 6M11 19C11 14 14 11 19 11" />
            <circle cx="17" cy="17" r="1.500" fill="#fcfcfc" />
          </svg>
        </button>
        <button aria-label="电池" className="mr-[23px]">
          <svg width="26" height="18" viewBox="0 0 26 18">
            <path d="M8 4H22V16H8Z" fill="none" stroke="#fcfcfc" strokeWidth="1.500" />
            <path d="M10 6H20V14H10ZM23 7H25V13H23Z" fill="#fcfcfc" />
            <path d="M1 4H8V8L5 10V17M3 0V4M6 0V4" fill={INK} stroke="#c5d6dc" strokeWidth="1.800" />
          </svg>
        </button>
        <button aria-label="音量" className="mr-[17px]">
          <svg width="26" height="22" viewBox="0 0 26 22" fill="none" stroke="#dbe6e9" strokeWidth="1.600">
            <path d="M1 7H4L9 2V20L4 15H1ZM13 7C15 9 15 13 13 15M17 4C20 8 20 14 17 18M21 1C26 7 26 15 21 21" />
          </svg>
        </button>
        <button className="mr-[17px] text-[20px] leading-[28px]">中</button>
        <button className="mr-[29px] text-center text-[19px] leading-[27px]">
          <span className="block">14:41:04</span>
          <span className="block">2020/3/22</span>
        </button>
        <button aria-label="操作中心" className="mr-[30px]">
          <svg width="25" height="25" viewBox="0 0 25 25">
            <path d="M0 0H24V20H16L12 24V20H0Z" fill="#fcfcfc" />
            <path d="M5 6H20M5 11H19M5 16H13" stroke={INK} strokeWidth="1.500" />
            <path d="M20 12C25 15 24 23 17 23C14 23 14 20 16 20C19 20 21 17 20 12Z" fill="#dbe6e9" stroke={INK} />
          </svg>
        </button>
        <span className="mr-[6px] h-[60px] w-px bg-[#60757d]" />
      </div>
    </footer>
  );
}

export default function App() {
  return (
    <div className="relative flex h-screen min-h-[900px] flex-col overflow-hidden bg-[#fcfcfc] font-['Noto_Sans','Noto_Sans_CJK_SC',sans-serif] text-[#16171a]">
      <TitleBar />
      <RibbonTabs />
      <Ribbon />
      <div className="flex min-h-0 flex-1">
        <NotebookBar />
        <div className="flex min-w-0 flex-1 flex-col">
          <SectionTabs />
          <div className="flex min-h-0 flex-1 border-t-5 border-l-5 border-[#9dbac3]">
            <div className="flex min-w-0 flex-1 flex-col">
              <div className="flex min-h-0 flex-1">
                <NotePage />
                <VerticalScroll />
              </div>
              <HorizontalScroll />
            </div>
            <PageList />
          </div>
        </div>
      </div>
      <Taskbar />
      <ImeBar />
    </div>
  );
}
